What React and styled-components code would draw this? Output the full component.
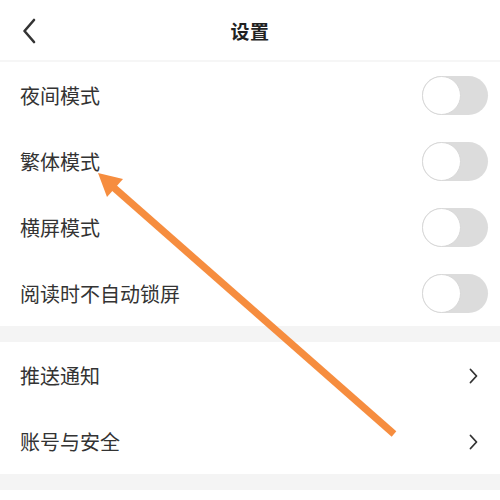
import React from 'react'
import styled, { createGlobalStyle } from 'styled-components'

const GlobalStyle = createGlobalStyle`
  html, body {
    margin: 0;
    padding: 0;
    background: #fff;
  }
  body {
    font-family: "Noto Sans CJK SC", "Noto Sans", sans-serif;
  }
`

const Page = styled.div`
  position: relative;
  width: 500px;
  height: 500px;
  overflow: hidden;
  background: #fff;
`

const Header = styled.header`
  height: 60px;
  display: flex;
  align-items: center;
  justify-content: center;
  position: relative;
  border-bottom: 2px solid #f6f6f6;
`

const Back = styled.button`
  position: absolute;
  left: 16px;
  top: 16px;
  width: 26px;
  height: 30px;
  border: none;
  background: none;
  padding: 0;
  display: flex;
  align-items: center;
  justify-content: center;
`

const Title = styled.h1`
  margin: 0;
  font-size: 19px;
  font-weight: 700;
  color: #222;
  letter-spacing: 0.5px;
`

const Group = styled.section`
  background: #fff;
`

const Gap = styled.div`
  height: ${p => p.h || 16}px;
  background: #f4f4f4;
`

const Row = styled.div`
  height: 66px;
  display: flex;
  align-items: center;
  justify-content: space-between;
  padding: 0 12px 0 20px;
`

const Label = styled.span`
  font-size: 20px;
  color: #333;
  line-height: 1;
  margin-top: 2px;
`

const Toggle = styled.div`
  width: 66px;
  height: 39px;
  border-radius: 20px;
  background: #dcdcdc;
  position: relative;
  box-sizing: border-box;
`

const Knob = styled.div`
  position: absolute;
  left: 0;
  top: 0;
  width: 39px;
  height: 39px;
  border-radius: 50%;
  background: #fff;
  border: 1px solid #d8d8d8;
  box-sizing: border-box;
`

const Chevron = styled.svg`
  margin-right: 10px;
  margin-top: 2px;
`

const Overlay = styled.svg`
  position: absolute;
  left: 0;
  top: 0;
  pointer-events: none;
`

const switches = ['夜间模式', '繁体模式', '横屏模式', '阅读时不自动锁屏']
const links = ['推送通知', '账号与安全']

const App = () => {
  return (
    <>
      <GlobalStyle />
      <Page>
        <Header>
          <Back>
            <svg width="14" height="26" viewBox="0 0 14 26">
              <path d="M12 2 L2.5 13 L12 24" fill="none" stroke="#333" strokeWidth="2.6" strokeLinecap="round" strokeLinejoin="round" />
            </svg>
          </Back>
          <Title>设置</Title>
        </Header>

        <Group>
          {switches.map(s => (
            <Row key={s}>
              <Label>{s}</Label>
              <Toggle><Knob /></Toggle>
            </Row>
          ))}
        </Group>
        <Gap />
        <Group>
          {links.map(s => (
            <Row key={s}>
              <Label>{s}</Label>
              <Chevron width="9" height="16" viewBox="0 0 9 16">
                <path d="M1.5 1.5 L7.5 8 L1.5 14.5" fill="none" stroke="#333" strokeWidth="1.8" strokeLinecap="round" strokeLinejoin="round" />
              </Chevron>
            </Row>
          ))}
        </Group>
        <Gap h={16} />

        {/* the orange arrow drawn on the screenshot */}
        <Overlay width="500" height="500" viewBox="0 0 500 500">
          <line x1="394" y1="434" x2="112" y2="186" stroke="#f68d3f" strokeWidth="7" />
          <polygon points="98,173 123,179 107,197" fill="#f68d3f" />
        </Overlay>
      </Page>
    </>
  )
}

export default App
